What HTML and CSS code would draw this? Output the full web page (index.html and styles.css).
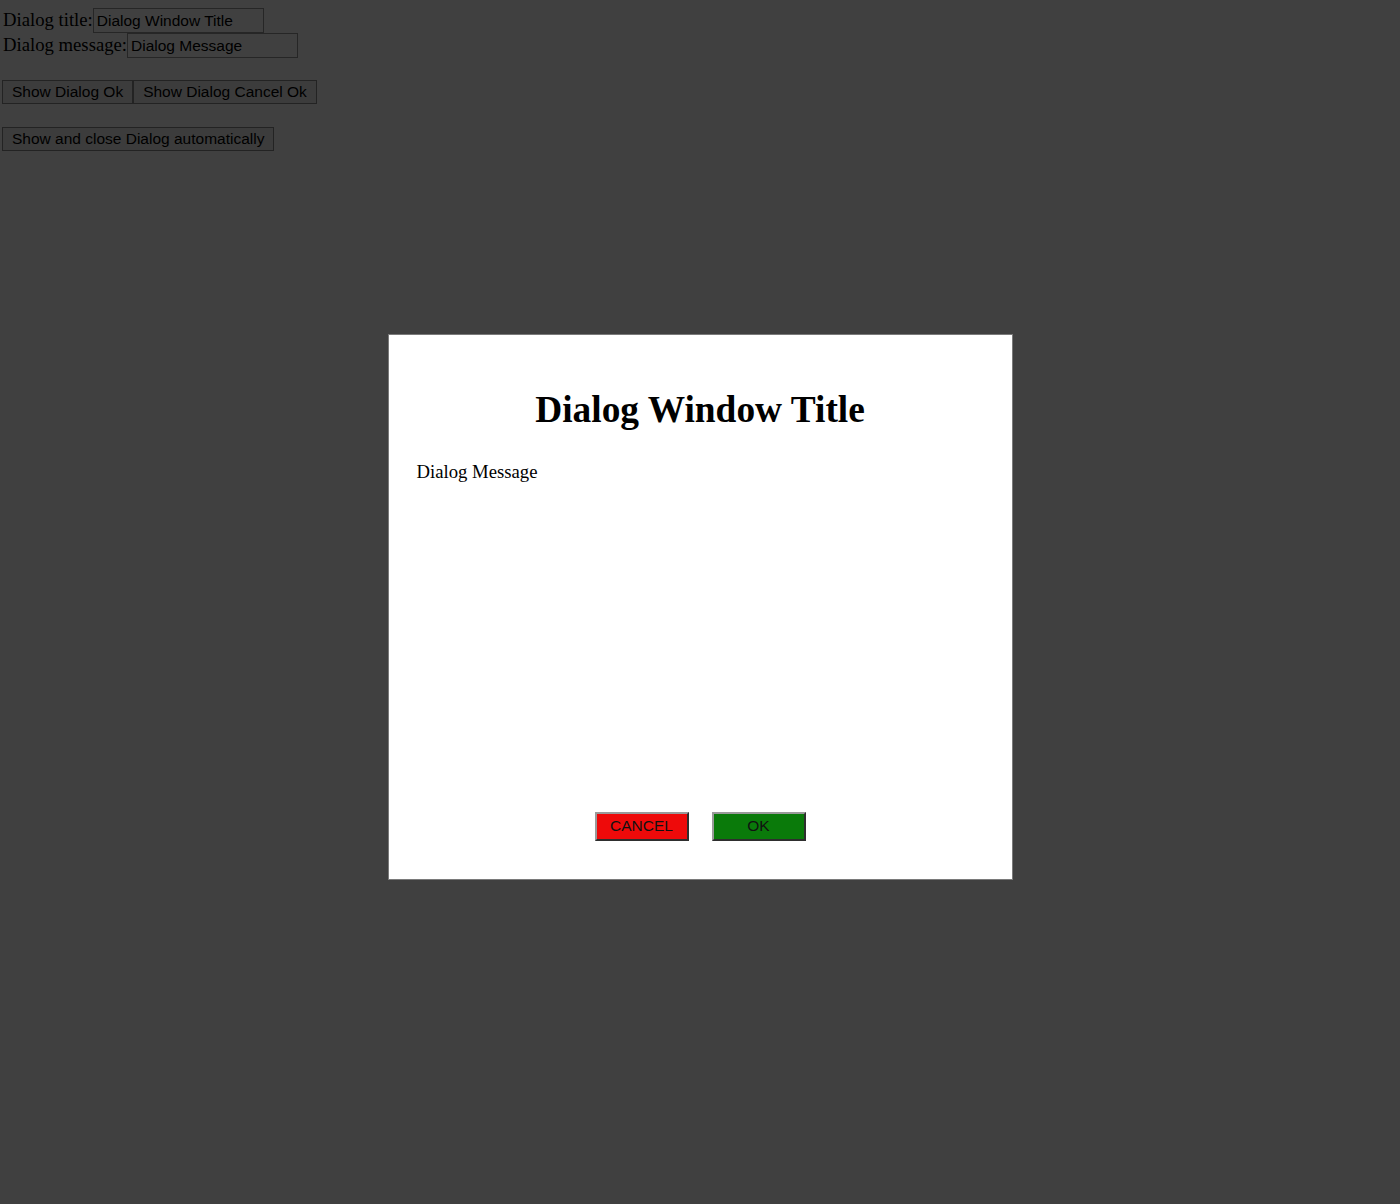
FILE: index.html
```html
<!DOCTYPE html>
<html>
<head>
<meta charset="utf-8">
<title>Dialog</title>
<link rel="stylesheet" href="styles.css">
</head>
<body>
<div class="page">
  <div class="field-row">
    <label class="field-label" for="t">Dialog title:</label><input id="t" class="field-input" type="text" value="Dialog Window Title">
  </div>
  <div class="field-row">
    <label class="field-label" for="m">Dialog message:</label><input id="m" class="field-input" type="text" value="Dialog Message">
  </div>
  <div class="btn-row first">
    <button class="page-btn">Show Dialog Ok</button><button class="page-btn">Show Dialog Cancel Ok</button>
  </div>
  <div class="btn-row second">
    <button class="page-btn">Show and close Dialog automatically</button>
  </div>
</div>
<div class="overlay">
  <div class="dialog">
    <h1 class="dialog-title">Dialog Window Title</h1>
    <p class="dialog-message">Dialog Message</p>
    <div class="dialog-actions">
      <button class="dlg-btn cancel">CANCEL</button>
      <button class="dlg-btn ok">OK</button>
    </div>
  </div>
</div>
</body>
</html>
```
FILE: styles.css
```css
html, body {
  margin: 0;
  padding: 0;
  background: #ffffff;
}
body {
  font-family: "Liberation Serif", "Times New Roman", serif;
  font-size: 18.7px;
  color: #000;
}
.page {
  padding: 8px 2px 0 2px;
  display: flex;
  flex-direction: column;
  align-items: flex-start;
}
.field-row {
  display: flex;
  align-items: baseline;
  height: 25px;
  padding-left: 1px;
}
.field-label {
  font-size: 18.7px;
  line-height: 22px;
}
.field-input {
  box-sizing: border-box;
  width: 171px;
  height: 25px;
  margin: 0;
  padding: 0 3px;
  border: 1px solid #999;
  background: #fff;
  font-family: "Liberation Sans", Arial, sans-serif;
  font-size: 15.5px;
  color: #000;
}
.btn-row {
  display: flex;
}
.btn-row.first {
  margin-top: 22px;
}
.btn-row.second {
  margin-top: 23px;
}
.page-btn {
  box-sizing: border-box;
  height: 24px;
  margin: 0;
  padding: 0 9px;
  border: 1px solid #8a8a8a;
  background: #efefef;
  font-family: "Liberation Sans", Arial, sans-serif;
  font-size: 15.5px;
  color: #000;
  line-height: 20px;
}
.overlay {
  position: fixed;
  inset: 0;
  background: rgba(0, 0, 0, 0.75);
  display: flex;
  align-items: center;
  justify-content: center;
  padding-top: 10px;
  box-sizing: border-box;
}
.dialog {
  box-sizing: border-box;
  width: 625px;
  height: 546px;
  background: #fff;
  border: 1px solid #7a7a7a;
  padding: 0 28px 38px 28px;
  display: flex;
  flex-direction: column;
}
.dialog-title {
  margin: 53px 0 0 0;
  font-size: 37.4px;
  line-height: 44px;
  font-weight: bold;
  text-align: center;
}
.dialog-message {
  margin: 29px 0 0 0;
  font-size: 18.7px;
  line-height: 22px;
}
.dialog-actions {
  margin-top: auto;
  display: flex;
  justify-content: center;
  gap: 23px;
}
.dlg-btn {
  box-sizing: border-box;
  width: 94px;
  height: 29px;
  margin: 0;
  padding: 0 0 1px 0;
  border-style: solid;
  border-width: 2px;
  border-color: #9a9a9a #2e2e2e #2e2e2e #9a9a9a;
  font-family: "Liberation Sans", Arial, sans-serif;
  font-size: 15.5px;
  color: #111;
  text-align: center;
}
.dlg-btn.cancel {
  background: #ee0a0a;
}
.dlg-btn.ok {
  background: #0a7a0a;
}
```
